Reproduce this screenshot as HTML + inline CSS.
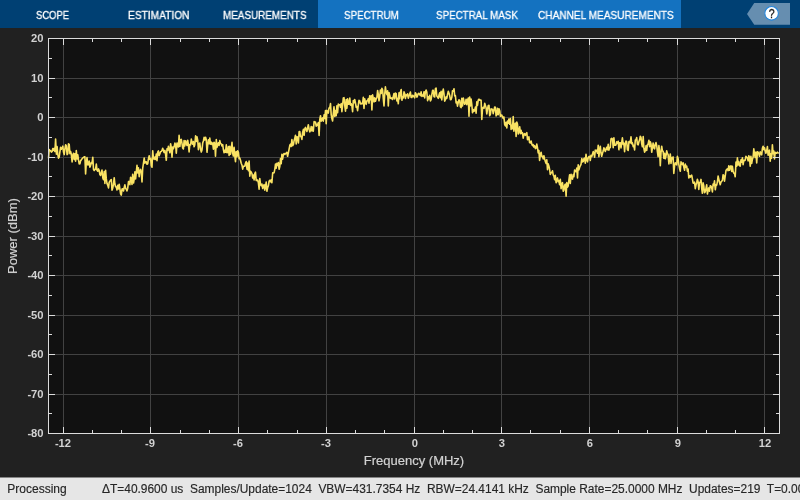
<!DOCTYPE html>
<html><head><meta charset="utf-8"><title>Spectrum Analyzer</title>
<style>
*{box-sizing:border-box;margin:0;padding:0}
html,body{width:800px;height:500px;overflow:hidden;background:#212121;font-family:"Liberation Sans",sans-serif;}
#tb{position:absolute;left:0;top:0;width:800px;height:28px;background:#004073;}
#act{position:absolute;left:318px;top:0;width:363px;height:28px;background:#1472c0;}
.tab{position:absolute;top:0;height:28px;line-height:30px;color:#fff;font-size:10.7px;white-space:nowrap;transform-origin:0 50%;-webkit-text-stroke:0.3px #fff;margin-left:0.2px}
#help{will-change:transform;position:absolute;left:747px;top:3px;width:43px;height:22px;}
#plotbg{position:absolute;left:48px;top:38px;width:732px;height:396px;background:#111111;}
svg#pl{position:absolute;left:0;top:0;width:800px;height:500px;}
.g{fill:#424242}
.t{fill:#dcdcdc}
.tr{fill:none;stroke:#f9e263;stroke-width:1.6;stroke-linejoin:round}
.yl,.xl,#xlab,#ylab span,#sb,.tab{will-change:transform}
.yl{position:absolute;left:0;width:43.6px;text-align:right;height:12px;line-height:12px;margin-top:-6px;font-weight:bold;font-size:10.2px;color:#d2d2d2;transform:scaleX(1.1);transform-origin:100% 50%;}
.xl{position:absolute;top:438px;width:40px;margin-left:-20px;text-align:center;height:12px;line-height:12px;font-weight:bold;font-size:10.2px;color:#d2d2d2;transform:scaleX(1.1);}
#xlab{position:absolute;left:313.5px;width:200px;top:452.7px;-webkit-text-stroke:0.2px #d2d2d2;text-align:center;font-size:13px;line-height:15px;color:#d2d2d2;}
#ylab{position:absolute;left:13px;top:236px;width:0;height:0;}
#ylab span{-webkit-text-stroke:0.2px #d2d2d2;position:absolute;left:-100px;width:200px;top:-8px;height:16px;line-height:16px;text-align:center;font-size:13px;color:#d2d2d2;transform:rotate(-90deg);transform-origin:50% 50%;white-space:nowrap;display:block}
#sb{position:absolute;left:0;top:477px;width:800px;height:23px;background:#e6e6e6;border-top:1px solid #868686;color:#262626;font-size:12px;line-height:23px;white-space:nowrap;overflow:hidden}
#sb span{position:absolute;top:0.4px;-webkit-text-stroke:0.15px #262626}
</style></head><body>
<div id="tb">
 <div id="act"></div>
 <div class="tab" style="left:36.25px;transform:scaleX(0.8819)">SCOPE</div>
 <div class="tab" style="left:128.25px;transform:scaleX(0.9530)">ESTIMATION</div>
 <div class="tab" style="left:223.25px;transform:scaleX(0.9250)">MEASUREMENTS</div>
 <div class="tab" style="left:343.75px;transform:scaleX(0.9128)">SPECTRUM</div>
 <div class="tab" style="left:435.95px;transform:scaleX(0.9166)">SPECTRAL MASK</div>
 <div class="tab" style="left:537.50px;transform:scaleX(0.9430)">CHANNEL MEASUREMENTS</div>
 <svg id="help" viewBox="0 0 43 22"><polygon points="0,10.9 7.25,0 43,0 43,21.75 7.25,21.75" fill="#668eb0"/><circle cx="24.6" cy="10.3" r="6.8" fill="#fff" stroke="#2385dc" stroke-width="1.1"/><text transform="translate(24.6 14.9) scale(0.88 1)" text-anchor="middle" font-family="Liberation Sans" font-size="12" fill="#1a1a1a" stroke="#1a1a1a" stroke-width="0.3">?</text></svg>
</div>
<div id="plotbg"></div>
<svg id="pl" viewBox="0 0 800 500">
<rect class="g" x="63" y="38" width="1" height="396"/>
<rect class="g" x="150" y="38" width="1" height="396"/>
<rect class="g" x="238" y="38" width="1" height="396"/>
<rect class="g" x="326" y="38" width="1" height="396"/>
<rect class="g" x="414" y="38" width="1" height="396"/>
<rect class="g" x="501" y="38" width="1" height="396"/>
<rect class="g" x="589" y="38" width="1" height="396"/>
<rect class="g" x="677" y="38" width="1" height="396"/>
<rect class="g" x="764" y="38" width="1" height="396"/>
<rect class="g" y="394" x="48" height="1" width="732"/>
<rect class="g" y="354" x="48" height="1" width="732"/>
<rect class="g" y="315" x="48" height="1" width="732"/>
<rect class="g" y="275" x="48" height="1" width="732"/>
<rect class="g" y="236" x="48" height="1" width="732"/>
<rect class="g" y="196" x="48" height="1" width="732"/>
<rect class="g" y="157" x="48" height="1" width="732"/>
<rect class="g" y="117" x="48" height="1" width="732"/>
<rect class="g" y="78" x="48" height="1" width="732"/>
<polyline class="tr" points="48.5,158.3 49.2,149.5 49.9,150.3 50.6,150.8 51.4,152.1 52.1,151.5 52.8,148.5 53.5,150.3 54.2,148.4 54.9,151.5 55.6,139.0 56.4,154.1 57.1,146.6 57.8,154.4 58.5,158.1 59.2,157.0 59.9,151.9 60.6,147.4 61.3,149.2 62.1,148.0 62.8,146.2 63.5,152.1 64.2,154.6 64.9,148.9 65.6,144.8 66.3,145.8 67.1,154.6 67.8,153.7 68.5,143.8 69.2,144.3 69.9,153.6 70.6,151.5 71.3,154.2 72.1,162.0 72.8,155.2 73.5,153.3 74.2,159.4 74.9,153.7 75.6,161.2 76.3,150.5 77.1,159.0 77.8,154.9 78.5,159.9 79.2,163.9 79.9,163.8 80.6,160.7 81.3,159.9 82.1,158.8 82.8,157.9 83.5,157.4 84.2,156.9 84.9,156.9 85.6,174.0 86.3,162.4 87.0,157.6 87.8,164.9 88.5,164.8 89.2,161.0 89.9,167.2 90.6,165.4 91.3,162.5 92.0,163.5 92.8,157.2 93.5,169.4 94.2,170.5 94.9,169.3 95.6,169.2 96.3,164.1 97.0,170.2 97.8,171.2 98.5,168.9 99.2,170.5 99.9,174.5 100.6,175.4 101.3,172.8 102.0,170.0 102.8,178.0 103.5,179.6 104.2,171.5 104.9,183.4 105.6,170.2 106.3,178.9 107.0,183.4 107.8,185.4 108.5,187.9 109.2,182.4 109.9,181.1 110.6,180.1 111.3,179.5 112.0,190.2 112.7,188.3 113.5,184.0 114.2,177.7 114.9,184.0 115.6,186.8 116.3,187.1 117.0,190.0 117.7,185.3 118.5,188.9 119.2,184.2 119.9,188.9 120.6,193.8 121.3,195.1 122.0,189.0 122.7,188.8 123.5,191.0 124.2,187.4 124.9,184.8 125.6,188.2 126.3,189.3 127.0,190.9 127.7,188.4 128.5,181.6 129.2,181.5 129.9,184.6 130.6,177.2 131.3,178.6 132.0,184.5 132.7,174.2 133.5,183.0 134.2,179.0 134.9,171.8 135.6,178.9 136.3,172.1 137.0,165.4 137.7,172.9 138.4,167.9 139.2,176.6 139.9,171.0 140.6,169.4 141.3,172.3 142.0,181.9 142.7,168.4 143.4,163.5 144.2,158.0 144.9,163.2 145.6,161.8 146.3,161.7 147.0,164.3 147.7,163.9 148.4,159.1 149.2,155.7 149.9,159.5 150.6,158.5 151.3,165.6 152.0,167.2 152.7,150.7 153.4,157.8 154.2,159.3 154.9,157.0 155.6,159.4 156.3,154.1 157.0,160.7 157.7,152.1 158.4,150.9 159.1,155.6 159.9,153.7 160.6,151.8 161.3,151.4 162.0,150.4 162.7,148.3 163.4,150.6 164.1,152.4 164.9,150.4 165.6,154.4 166.3,160.3 167.0,148.7 167.7,150.3 168.4,146.3 169.1,149.6 169.9,152.8 170.6,143.7 171.3,147.7 172.0,157.2 172.7,147.0 173.4,148.8 174.1,146.8 174.9,143.1 175.6,144.8 176.3,153.2 177.0,143.1 177.7,143.9 178.4,147.0 179.1,135.3 179.9,146.5 180.6,139.7 181.3,139.4 182.0,143.3 182.7,148.1 183.4,149.0 184.1,140.6 184.8,146.0 185.6,140.7 186.3,143.3 187.0,145.4 187.7,140.2 188.4,144.6 189.1,151.9 189.8,144.5 190.6,144.9 191.3,139.1 192.0,142.3 192.7,144.1 193.4,141.6 194.1,146.8 194.8,144.7 195.6,135.9 196.3,141.5 197.0,136.8 197.7,140.1 198.4,149.6 199.1,143.9 199.8,143.0 200.6,149.4 201.3,152.1 202.0,149.9 202.7,143.1 203.4,140.9 204.1,137.4 204.8,139.9 205.6,137.2 206.3,139.9 207.0,152.3 207.7,144.9 208.4,139.9 209.1,143.8 209.8,138.1 210.5,144.1 211.3,142.2 212.0,144.4 212.7,143.0 213.4,149.1 214.1,142.2 214.8,143.7 215.5,156.2 216.3,139.6 217.0,147.4 217.7,144.6 218.4,142.8 219.1,145.5 219.8,140.6 220.5,143.6 221.3,143.9 222.0,145.9 222.7,144.6 223.4,149.6 224.1,152.8 224.8,150.3 225.5,152.3 226.3,144.8 227.0,152.8 227.7,152.2 228.4,146.6 229.1,155.5 229.8,146.3 230.5,154.1 231.2,149.8 232.0,142.3 232.7,153.2 233.4,156.0 234.1,147.2 234.8,155.8 235.5,161.7 236.2,151.6 237.0,156.6 237.7,150.8 238.4,152.4 239.1,158.6 239.8,158.0 240.5,160.3 241.2,163.3 242.0,165.2 242.7,169.1 243.4,166.2 244.1,166.2 244.8,166.1 245.5,163.3 246.2,161.6 247.0,169.1 247.7,163.1 248.4,170.6 249.1,161.1 249.8,176.1 250.5,171.3 251.2,172.0 252.0,173.8 252.7,178.0 253.4,175.1 254.1,180.0 254.8,173.6 255.5,172.2 256.2,180.4 256.9,180.6 257.7,180.0 258.4,182.9 259.1,189.1 259.8,178.5 260.5,184.4 261.2,185.7 261.9,184.1 262.7,188.5 263.4,185.5 264.1,184.7 264.8,190.1 265.5,186.6 266.2,182.0 266.9,191.3 267.7,187.4 268.4,185.6 269.1,181.2 269.8,180.3 270.5,181.8 271.2,179.7 271.9,182.7 272.7,172.7 273.4,172.9 274.1,172.7 274.8,169.3 275.5,164.0 276.2,168.2 276.9,163.2 277.7,165.4 278.4,162.6 279.1,169.2 279.8,166.5 280.5,158.6 281.2,163.6 281.9,154.3 282.6,159.2 283.4,154.6 284.1,153.5 284.8,154.5 285.5,153.5 286.2,153.3 286.9,152.3 287.6,156.3 288.4,152.6 289.1,149.1 289.8,145.3 290.5,144.2 291.2,146.5 291.9,139.6 292.6,145.7 293.4,144.6 294.1,140.7 294.8,138.1 295.5,135.2 296.2,144.0 296.9,136.8 297.6,137.0 298.4,143.0 299.1,131.8 299.8,131.5 300.5,136.4 301.2,136.5 301.9,139.4 302.6,132.6 303.4,129.4 304.1,135.3 304.8,128.8 305.5,127.4 306.2,129.6 306.9,131.5 307.6,128.1 308.3,124.7 309.1,129.2 309.8,131.9 310.5,130.4 311.2,126.6 311.9,130.9 312.6,127.1 313.3,131.2 314.1,121.6 314.8,122.4 315.5,122.1 316.2,126.2 316.9,124.2 317.6,125.3 318.3,122.6 319.1,135.4 319.8,119.4 320.5,115.7 321.2,121.2 321.9,119.9 322.6,117.9 323.3,121.2 324.1,114.9 324.8,118.4 325.5,110.6 326.2,123.6 326.9,110.3 327.6,111.8 328.3,113.1 329.0,108.0 329.8,107.7 330.5,103.6 331.2,114.6 331.9,118.5 332.6,121.0 333.3,113.5 334.0,106.9 334.8,116.5 335.5,110.5 336.2,115.7 336.9,105.9 337.6,112.6 338.3,104.1 339.0,104.6 339.8,104.7 340.5,107.2 341.2,103.6 341.9,111.6 342.6,105.2 343.3,98.0 344.0,97.7 344.8,105.8 345.5,111.2 346.2,99.6 346.9,108.3 347.6,98.9 348.3,104.3 349.0,104.2 349.8,98.1 350.5,105.2 351.2,103.8 351.9,105.8 352.6,111.6 353.3,100.6 354.0,102.8 354.7,99.5 355.5,103.2 356.2,107.3 356.9,106.5 357.6,110.6 358.3,105.1 359.0,100.3 359.7,100.8 360.5,103.9 361.2,103.3 361.9,103.9 362.6,103.3 363.3,97.3 364.0,108.4 364.7,98.7 365.5,102.6 366.2,104.3 366.9,100.7 367.6,100.6 368.3,98.7 369.0,103.2 369.7,95.7 370.5,99.8 371.2,95.7 371.9,109.9 372.6,94.9 373.3,98.6 374.0,101.9 374.7,97.7 375.5,101.3 376.2,98.9 376.9,97.5 377.6,90.5 378.3,94.4 379.0,100.8 379.7,97.0 380.4,90.1 381.2,93.5 381.9,88.2 382.6,89.8 383.3,98.6 384.0,105.9 384.7,94.4 385.4,86.9 386.2,92.6 386.9,94.6 387.6,90.9 388.3,105.9 389.0,92.5 389.7,95.3 390.4,98.2 391.2,98.6 391.9,97.8 392.6,99.5 393.3,96.5 394.0,93.5 394.7,99.0 395.4,93.0 396.2,93.7 396.9,101.0 397.6,98.6 398.3,103.8 399.0,92.8 399.7,98.8 400.4,92.0 401.2,89.6 401.9,100.3 402.6,96.9 403.3,97.8 404.0,91.8 404.7,93.6 405.4,98.5 406.1,94.7 406.9,95.7 407.6,93.8 408.3,98.2 409.0,96.2 409.7,94.1 410.4,92.1 411.1,97.4 411.9,97.4 412.6,95.2 413.3,95.8 414.0,96.6 414.7,97.8 415.4,92.7 416.1,93.9 416.9,97.1 417.6,95.6 418.3,93.5 419.0,93.3 419.7,94.5 420.4,95.6 421.1,91.8 421.9,96.4 422.6,95.0 423.3,96.1 424.0,91.9 424.7,97.9 425.4,91.7 426.1,90.1 426.8,92.0 427.6,100.7 428.3,96.9 429.0,98.8 429.7,95.3 430.4,101.0 431.1,99.6 431.8,94.8 432.6,90.3 433.3,90.3 434.0,96.6 434.7,96.9 435.4,88.9 436.1,88.1 436.8,96.0 437.6,97.1 438.3,98.3 439.0,95.0 439.7,92.7 440.4,97.6 441.1,91.4 441.8,99.9 442.6,92.3 443.3,89.1 444.0,94.0 444.7,101.1 445.4,99.7 446.1,96.9 446.8,98.4 447.6,94.2 448.3,91.3 449.0,93.3 449.7,95.5 450.4,99.6 451.1,99.5 451.8,97.3 452.5,90.7 453.3,91.1 454.0,88.7 454.7,96.0 455.4,95.6 456.1,103.0 456.8,101.6 457.5,106.2 458.3,102.3 459.0,99.8 459.7,100.6 460.4,106.7 461.1,107.6 461.8,98.2 462.5,106.0 463.3,98.0 464.0,101.5 464.7,104.2 465.4,103.3 466.1,99.2 466.8,104.6 467.5,100.5 468.3,98.0 469.0,116.2 469.7,97.0 470.4,105.9 471.1,99.0 471.8,104.3 472.5,112.7 473.3,109.6 474.0,111.3 474.7,110.1 475.4,107.1 476.1,113.1 476.8,101.7 477.5,105.5 478.2,100.3 479.0,99.1 479.7,100.2 480.4,100.0 481.1,100.3 481.8,119.4 482.5,108.4 483.2,107.3 484.0,108.3 484.7,103.3 485.4,105.6 486.1,107.8 486.8,113.9 487.5,109.4 488.2,105.7 489.0,105.3 489.7,115.8 490.4,114.2 491.1,108.7 491.8,109.4 492.5,109.3 493.2,113.6 494.0,110.5 494.7,107.0 495.4,107.2 496.1,115.9 496.8,114.6 497.5,108.3 498.2,114.6 499.0,108.7 499.7,110.7 500.4,116.3 501.1,115.3 501.8,115.1 502.5,117.3 503.2,118.3 503.9,116.9 504.7,124.6 505.4,126.0 506.1,122.2 506.8,127.9 507.5,121.0 508.2,123.3 508.9,119.0 509.7,124.3 510.4,118.5 511.1,129.4 511.8,125.4 512.5,128.6 513.2,116.6 513.9,131.1 514.7,124.4 515.4,123.2 516.1,136.5 516.8,122.0 517.5,124.3 518.2,133.9 518.9,131.6 519.7,126.7 520.4,133.7 521.1,130.4 521.8,133.5 522.5,132.8 523.2,138.1 523.9,134.3 524.6,133.7 525.4,135.3 526.1,133.7 526.8,132.7 527.5,139.7 528.2,139.3 528.9,136.8 529.6,142.6 530.4,143.0 531.1,141.0 531.8,144.2 532.5,145.7 533.2,144.6 533.9,147.1 534.6,145.6 535.4,148.6 536.1,147.9 536.8,144.1 537.5,147.9 538.2,153.0 538.9,150.4 539.6,160.4 540.4,154.5 541.1,152.2 541.8,156.4 542.5,156.2 543.2,158.9 543.9,155.7 544.6,158.9 545.4,161.7 546.1,163.4 546.8,159.7 547.5,169.7 548.2,163.9 548.9,165.9 549.6,169.4 550.3,174.5 551.1,172.9 551.8,172.3 552.5,170.8 553.2,174.8 553.9,176.1 554.6,179.7 555.3,175.3 556.1,182.7 556.8,179.9 557.5,177.9 558.2,181.8 558.9,180.6 559.6,184.7 560.3,179.3 561.1,188.6 561.8,183.7 562.5,182.6 563.2,191.3 563.9,190.0 564.6,185.1 565.3,184.1 566.1,196.3 566.8,182.5 567.5,187.2 568.2,185.9 568.9,180.0 569.6,174.8 570.3,183.4 571.1,174.3 571.8,178.8 572.5,179.1 573.2,174.5 573.9,176.7 574.6,170.1 575.3,170.8 576.0,171.6 576.8,168.1 577.5,178.0 578.2,164.8 578.9,169.9 579.6,167.5 580.3,165.8 581.0,164.3 581.8,158.5 582.5,161.9 583.2,161.5 583.9,158.6 584.6,158.1 585.3,163.1 586.0,154.2 586.8,159.9 587.5,161.8 588.2,157.8 588.9,156.6 589.6,156.4 590.3,160.4 591.0,155.4 591.8,156.5 592.5,154.1 593.2,151.6 593.9,153.5 594.6,157.2 595.3,150.1 596.0,151.3 596.8,150.2 597.5,153.3 598.2,145.2 598.9,156.7 599.6,149.9 600.3,146.2 601.0,153.0 601.7,156.3 602.5,153.2 603.2,151.1 603.9,147.7 604.6,149.4 605.3,151.5 606.0,149.2 606.7,147.2 607.5,149.7 608.2,144.4 608.9,150.1 609.6,147.8 610.3,147.5 611.0,138.9 611.7,138.3 612.5,139.1 613.2,147.6 613.9,137.8 614.6,145.2 615.3,145.2 616.0,144.9 616.7,141.9 617.5,143.4 618.2,141.3 618.9,149.8 619.6,142.8 620.3,142.7 621.0,147.9 621.7,142.7 622.4,137.9 623.2,144.4 623.9,143.1 624.6,151.6 625.3,144.0 626.0,141.0 626.7,141.7 627.4,149.7 628.2,150.5 628.9,141.8 629.6,141.4 630.3,142.8 631.0,136.9 631.7,143.8 632.4,142.8 633.2,146.7 633.9,145.4 634.6,149.9 635.3,140.0 636.0,139.8 636.7,137.5 637.4,144.1 638.2,144.8 638.9,141.8 639.6,139.9 640.3,136.2 641.0,137.4 641.7,143.7 642.4,146.8 643.2,136.6 643.9,148.7 644.6,152.1 645.3,150.7 646.0,145.8 646.7,150.5 647.4,144.9 648.1,144.1 648.9,140.2 649.6,146.7 650.3,141.7 651.0,143.9 651.7,152.3 652.4,148.2 653.1,143.1 653.9,147.7 654.6,148.8 655.3,144.2 656.0,142.6 656.7,145.7 657.4,151.7 658.1,156.7 658.9,145.5 659.6,151.6 660.3,165.6 661.0,152.5 661.7,146.2 662.4,150.9 663.1,151.2 663.9,158.3 664.6,153.4 665.3,158.8 666.0,155.8 666.7,150.7 667.4,153.5 668.1,154.5 668.9,163.9 669.6,158.3 670.3,154.0 671.0,163.4 671.7,157.5 672.4,158.9 673.1,156.9 673.8,173.4 674.6,165.7 675.3,162.8 676.0,163.5 676.7,164.9 677.4,156.4 678.1,158.6 678.8,164.3 679.6,168.7 680.3,171.2 681.0,161.9 681.7,163.3 682.4,164.6 683.1,162.8 683.8,167.0 684.6,170.2 685.3,164.1 686.0,167.3 686.7,166.1 687.4,171.2 688.1,169.0 688.8,178.0 689.6,175.7 690.3,177.1 691.0,175.6 691.7,175.1 692.4,178.9 693.1,183.0 693.8,183.3 694.5,182.2 695.3,188.7 696.0,184.8 696.7,182.7 697.4,179.2 698.1,181.7 698.8,189.4 699.5,182.8 700.3,182.0 701.0,179.4 701.7,188.3 702.4,193.3 703.1,182.8 703.8,186.0 704.5,192.7 705.3,191.7 706.0,188.3 706.7,184.7 707.4,194.0 708.1,190.3 708.8,187.9 709.5,191.1 710.3,185.7 711.0,186.1 711.7,187.8 712.4,191.9 713.1,184.1 713.8,185.3 714.5,180.8 715.3,189.8 716.0,184.9 716.7,185.1 717.4,181.8 718.1,176.0 718.8,179.2 719.5,182.2 720.2,184.7 721.0,182.1 721.7,181.2 722.4,180.3 723.1,174.7 723.8,175.9 724.5,181.2 725.2,176.2 726.0,170.5 726.7,169.4 727.4,168.9 728.1,170.6 728.8,165.7 729.5,170.3 730.2,166.8 731.0,165.9 731.7,171.5 732.4,166.3 733.1,171.4 733.8,173.1 734.5,173.5 735.2,176.8 736.0,162.1 736.7,166.2 737.4,157.8 738.1,164.9 738.8,161.6 739.5,165.3 740.2,166.2 741.0,159.8 741.7,162.3 742.4,157.8 743.1,164.7 743.8,160.2 744.5,160.6 745.2,160.2 745.9,156.4 746.7,157.2 747.4,157.9 748.1,160.9 748.8,155.7 749.5,157.8 750.2,166.3 750.9,156.3 751.7,163.4 752.4,159.3 753.1,157.2 753.8,148.9 754.5,154.4 755.2,157.5 755.9,152.0 756.7,162.9 757.4,151.7 758.1,152.1 758.8,153.7 759.5,156.2 760.2,151.8 760.9,153.3 761.7,154.8 762.4,148.3 763.1,146.2 763.8,149.6 764.5,147.8 765.2,150.8 765.9,153.2 766.7,150.6 767.4,146.6 768.1,155.3 768.8,151.6 769.5,150.2 770.2,161.1 770.9,153.8 771.6,158.1 772.4,144.9 773.1,153.7 773.8,151.1 774.5,159.0 775.2,152.4 775.9,152.9 776.6,153.2 777.4,152.2 778.1,152.9 778.8,153.4"/>
<rect class="t" x="63" y="38" width="1" height="7"/>
<rect class="t" x="63" y="427" width="1" height="7"/>
<rect class="t" x="92" y="38" width="1" height="4"/>
<rect class="t" x="92" y="430" width="1" height="4"/>
<rect class="t" x="121" y="38" width="1" height="4"/>
<rect class="t" x="121" y="430" width="1" height="4"/>
<rect class="t" x="150" y="38" width="1" height="7"/>
<rect class="t" x="150" y="427" width="1" height="7"/>
<rect class="t" x="180" y="38" width="1" height="4"/>
<rect class="t" x="180" y="430" width="1" height="4"/>
<rect class="t" x="209" y="38" width="1" height="4"/>
<rect class="t" x="209" y="430" width="1" height="4"/>
<rect class="t" x="238" y="38" width="1" height="7"/>
<rect class="t" x="238" y="427" width="1" height="7"/>
<rect class="t" x="267" y="38" width="1" height="4"/>
<rect class="t" x="267" y="430" width="1" height="4"/>
<rect class="t" x="297" y="38" width="1" height="4"/>
<rect class="t" x="297" y="430" width="1" height="4"/>
<rect class="t" x="326" y="38" width="1" height="7"/>
<rect class="t" x="326" y="427" width="1" height="7"/>
<rect class="t" x="355" y="38" width="1" height="4"/>
<rect class="t" x="355" y="430" width="1" height="4"/>
<rect class="t" x="384" y="38" width="1" height="4"/>
<rect class="t" x="384" y="430" width="1" height="4"/>
<rect class="t" x="414" y="38" width="1" height="7"/>
<rect class="t" x="414" y="427" width="1" height="7"/>
<rect class="t" x="443" y="38" width="1" height="4"/>
<rect class="t" x="443" y="430" width="1" height="4"/>
<rect class="t" x="472" y="38" width="1" height="4"/>
<rect class="t" x="472" y="430" width="1" height="4"/>
<rect class="t" x="501" y="38" width="1" height="7"/>
<rect class="t" x="501" y="427" width="1" height="7"/>
<rect class="t" x="530" y="38" width="1" height="4"/>
<rect class="t" x="530" y="430" width="1" height="4"/>
<rect class="t" x="560" y="38" width="1" height="4"/>
<rect class="t" x="560" y="430" width="1" height="4"/>
<rect class="t" x="589" y="38" width="1" height="7"/>
<rect class="t" x="589" y="427" width="1" height="7"/>
<rect class="t" x="618" y="38" width="1" height="4"/>
<rect class="t" x="618" y="430" width="1" height="4"/>
<rect class="t" x="647" y="38" width="1" height="4"/>
<rect class="t" x="647" y="430" width="1" height="4"/>
<rect class="t" x="677" y="38" width="1" height="7"/>
<rect class="t" x="677" y="427" width="1" height="7"/>
<rect class="t" x="706" y="38" width="1" height="4"/>
<rect class="t" x="706" y="430" width="1" height="4"/>
<rect class="t" x="735" y="38" width="1" height="4"/>
<rect class="t" x="735" y="430" width="1" height="4"/>
<rect class="t" x="764" y="38" width="1" height="7"/>
<rect class="t" x="764" y="427" width="1" height="7"/>
<rect class="t" y="413" x="48" height="1" width="4"/>
<rect class="t" y="413" x="776" height="1" width="4"/>
<rect class="t" y="394" x="48" height="1" width="7"/>
<rect class="t" y="394" x="773" height="1" width="7"/>
<rect class="t" y="374" x="48" height="1" width="4"/>
<rect class="t" y="374" x="776" height="1" width="4"/>
<rect class="t" y="354" x="48" height="1" width="7"/>
<rect class="t" y="354" x="773" height="1" width="7"/>
<rect class="t" y="334" x="48" height="1" width="4"/>
<rect class="t" y="334" x="776" height="1" width="4"/>
<rect class="t" y="315" x="48" height="1" width="7"/>
<rect class="t" y="315" x="773" height="1" width="7"/>
<rect class="t" y="295" x="48" height="1" width="4"/>
<rect class="t" y="295" x="776" height="1" width="4"/>
<rect class="t" y="275" x="48" height="1" width="7"/>
<rect class="t" y="275" x="773" height="1" width="7"/>
<rect class="t" y="255" x="48" height="1" width="4"/>
<rect class="t" y="255" x="776" height="1" width="4"/>
<rect class="t" y="236" x="48" height="1" width="7"/>
<rect class="t" y="236" x="773" height="1" width="7"/>
<rect class="t" y="216" x="48" height="1" width="4"/>
<rect class="t" y="216" x="776" height="1" width="4"/>
<rect class="t" y="196" x="48" height="1" width="7"/>
<rect class="t" y="196" x="773" height="1" width="7"/>
<rect class="t" y="176" x="48" height="1" width="4"/>
<rect class="t" y="176" x="776" height="1" width="4"/>
<rect class="t" y="157" x="48" height="1" width="7"/>
<rect class="t" y="157" x="773" height="1" width="7"/>
<rect class="t" y="137" x="48" height="1" width="4"/>
<rect class="t" y="137" x="776" height="1" width="4"/>
<rect class="t" y="117" x="48" height="1" width="7"/>
<rect class="t" y="117" x="773" height="1" width="7"/>
<rect class="t" y="97" x="48" height="1" width="4"/>
<rect class="t" y="97" x="776" height="1" width="4"/>
<rect class="t" y="78" x="48" height="1" width="7"/>
<rect class="t" y="78" x="773" height="1" width="7"/>
<rect class="t" y="58" x="48" height="1" width="4"/>
<rect class="t" y="58" x="776" height="1" width="4"/>
<rect class="t" y="38" x="48" height="1" width="732"/>
<rect class="t" y="433" x="48" height="1" width="732"/>
<rect class="t" x="48" y="38" width="1" height="396"/>
<rect class="t" x="779" y="38" width="1" height="396"/>
</svg>
<div class="yl" style="top:433.5px">-80</div>
<div class="yl" style="top:394.5px">-70</div>
<div class="yl" style="top:354.5px">-60</div>
<div class="yl" style="top:315.5px">-50</div>
<div class="yl" style="top:275.5px">-40</div>
<div class="yl" style="top:236.5px">-30</div>
<div class="yl" style="top:196.5px">-20</div>
<div class="yl" style="top:157.5px">-10</div>
<div class="yl" style="top:117.5px">0</div>
<div class="yl" style="top:78.5px">10</div>
<div class="yl" style="top:38.5px">20</div>
<div class="xl" style="left:63.0px">-12</div>
<div class="xl" style="left:150.0px">-9</div>
<div class="xl" style="left:238.0px">-6</div>
<div class="xl" style="left:326.0px">-3</div>
<div class="xl" style="left:414.5px">0</div>
<div class="xl" style="left:501.5px">3</div>
<div class="xl" style="left:589.5px">6</div>
<div class="xl" style="left:677.5px">9</div>
<div class="xl" style="left:764.5px">12</div>
<div id="xlab">Frequency (MHz)</div>
<div id="ylab"><span>Power (dBm)</span></div>
<div id="sb"><span style="left:7.3px">Processing</span><span style="left:102.4px;transform:scaleX(0.995);transform-origin:0 50%">ΔT=40.9600 us&nbsp; Samples/Update=1024&nbsp; VBW=431.7354 Hz&nbsp; RBW=24.4141 kHz&nbsp; Sample Rate=25.0000 MHz&nbsp; Updates=219&nbsp; T=0.0090</span></div>
</body></html>
